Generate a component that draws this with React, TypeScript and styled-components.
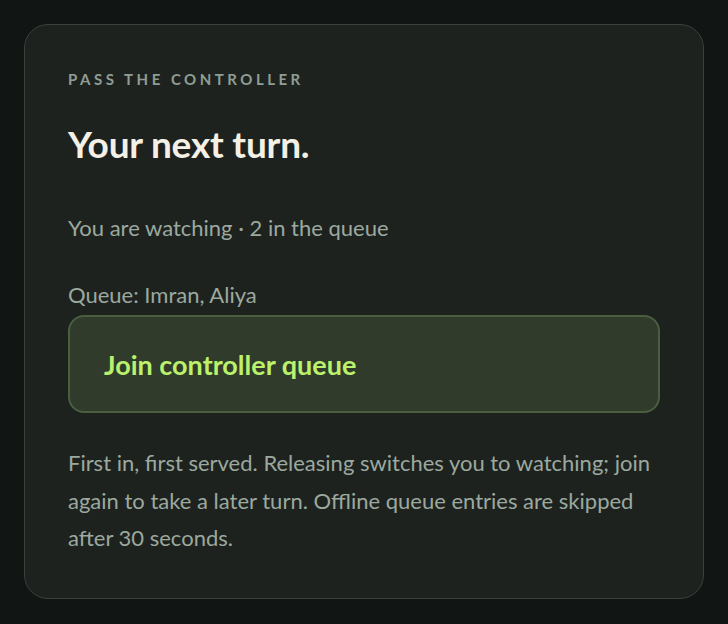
import * as React from "react";
import styled, { createGlobalStyle } from "styled-components";

const GlobalStyle = createGlobalStyle`
  html, body {
    margin: 0;
    padding: 0;
    background: #111514;
  }
  body {
    font-family: Lato, "Noto Sans", sans-serif;
  }
`;

const Page = styled.div`
  padding: 24px;
  min-height: 624px;
  box-sizing: border-box;
`;

const Card = styled.section`
  background: #1e221f;
  border: 1px solid #3a403b;
  border-radius: 24px;
  padding: 44px 43px 41px;
  display: flex;
  flex-direction: column;
`;

const Eyebrow = styled.div`
  font-size: 15px;
  font-weight: 700;
  letter-spacing: 3.5px;
  color: #8f9d95;
  text-transform: uppercase;
  line-height: 20px;
`;

const Title = styled.h1`
  margin: 33px 0 0;
  font-size: 37px;
  font-weight: 700;
  color: #f4f0e6;
  line-height: 44px;
  letter-spacing: -0.2px;
`;

const BodyText = styled.p<{ $gap: number }>`
  margin: ${(p) => p.$gap}px 0 0;
  font-size: 22px;
  color: #9ba99f;
  line-height: 30px;
`;

const JoinButton = styled.button`
  margin-top: 5px;
  font-family: inherit;
  text-align: left;
  background: #313b2c;
  border: 2px solid #4b5e3f;
  border-radius: 16px;
  padding: 3px 34px 0;
  height: 98px;
  font-size: 27px;
  line-height: 1.2;
  font-weight: 700;
  color: #bbf16b;
  cursor: pointer;
`;

const Note = styled.p`
  margin: 31px 0 0;
  font-size: 22px;
  color: #9ba99f;
  line-height: 37.5px;
`;

export default function App() {
  return (
    <Page>
      <GlobalStyle />
      <Card>
        <Eyebrow>Pass the controller</Eyebrow>
        <Title>Your next turn.</Title>
        <BodyText $gap={47}>You are watching · 2 in the queue</BodyText>
        <BodyText $gap={37}>Queue: Imran, Aliya</BodyText>
        <JoinButton type="button">Join controller queue</JoinButton>
        <Note>
          First in, first served. Releasing switches you to watching; join
          again to take a later turn. Offline queue entries are skipped after
          30 seconds.
        </Note>
      </Card>
    </Page>
  );
}
